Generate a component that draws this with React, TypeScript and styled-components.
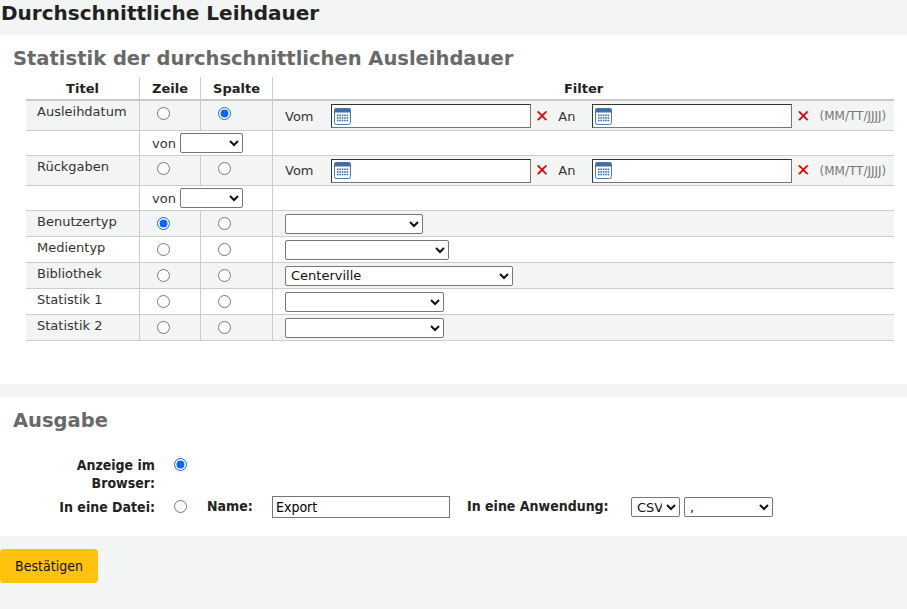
import React from "react";
import styled, { createGlobalStyle } from "styled-components";

const Global = createGlobalStyle`
  html, body { margin: 0; background: #f3f4f4; font-family: "DejaVu Sans", sans-serif; color: #333; }
  input[type=radio] { width: 13px; height: 13px; margin: 0; accent-color: #0a66ff; }
`;

const H1 = styled.h1`
  margin: 0; padding: 1px 0 0 1px; height: 35px; box-sizing: border-box;
  font-size: 20px; font-weight: bold; color: #222;
`;
const Panel = styled.div<{ $h: number }>`
  background: #fff; height: ${p => p.$h}px; box-sizing: border-box; padding: 12px 13px 0 13px;
  margin-bottom: 13px;
`;
const H2 = styled.h2`
  margin: 0; font-size: 19.5px; font-weight: bold; color: #696969; height: 30px;
`;
const Table = styled.table`
  border-collapse: collapse; margin-left: 13px; width: 868px; font-size: 13px;
  th { font-weight: bold; font-size: 13px; height: 22px; border-bottom: 2px solid #c8c8c8; padding: 0; color: #222; }
  th + th, td + td { border-left: 1px solid #ccc; }
  td { border-bottom: 1px solid #ccc; vertical-align: top; padding: 0; }
`;
const Row = styled.tr<{ $alt?: boolean; $h: number }>`
  background: ${p => (p.$alt ? "#f3f4f4" : "#fff")};
  height: ${p => p.$h}px;
`;
const Title = styled.td`padding: 3px 0 0 11px !important; color: #333;`;
const RadioCell = styled.td`padding: 6px 0 0 17px !important;`;
const FilterCell = styled.td`padding: 3px 0 0 12px !important;`;
const Flex = styled.div`display: flex; align-items: center; gap: 0;`;
const Lbl = styled.span<{ $w: number }>`width: ${p => p.$w}px; flex-shrink: 0;`;
const DateBox = styled.div`
  width: 200px; height: 24px; box-sizing: border-box; border: 1px solid #767676; border-top-color: #333; border-left-color: #333;
  display: flex; align-items: center; padding-left: 2px; background: #fff;
`;
const X = styled.span`color: #d00; font-weight: bold; font-size: 17px; margin: 0 9px 0 4px; line-height: 1;`;
const Hint = styled.span`color: #777; font-size: 12px;`;
const Select = styled.select<{ $w: number }>`
  width: ${p => p.$w}px; height: 20px; font-size: 13px; font-family: "DejaVu Sans", sans-serif;
  border: 1px solid #767676; border-radius: 2px; background: #fff; color: #111; padding: 0 1px;
`;
const VonCell = styled.td`padding: 2px 0 0 12px !important;`;

const Cal = () => (
  <svg width="17" height="17" viewBox="0 0 17 17">
    <rect x="0.5" y="0.5" width="16" height="16" rx="2" fill="#fff" stroke="#4a78b0" />
    <rect x="0.5" y="0.5" width="16" height="4" fill="#3f6ea8" />
    {[0, 1, 2].map(r => [0, 1, 2, 3, 4].map(c => (
      <rect key={r + "-" + c} x={3 + c * 2.4} y={6.5 + r * 2.6} width="1.6" height="1.6" fill="#3f6ea8" />
    )))}
  </svg>
);

const DateRow = () => (
  <Flex>
    <Lbl $w={46}>Vom</Lbl>
    <DateBox><Cal /></DateBox>
    <X>✕</X>
    <Lbl $w={34}>An</Lbl>
    <DateBox><Cal /></DateBox>
    <X>✕</X>
    <Hint>(MM/TT/JJJJ)</Hint>
  </Flex>
);

const Out = styled.div`
  display: grid; grid-template-columns: 142px auto; column-gap: 19px; row-gap: 6px;
  margin-top: 17px; font-size: 14px; font-weight: bold; font-stretch: condensed; color: #222;
  font-family: "DejaVu Sans Condensed", "DejaVu Sans", sans-serif;
`;
const OutLbl = styled.div`text-align: right; line-height: 18px;`;
const OutRow = styled.div`display: flex; align-items: flex-start; gap: 0;`;
const TextIn = styled.input`
  width: 178px; height: 22px; box-sizing: border-box; border: 1px solid #767676; font-size: 14px;
  font-family: inherit; font-weight: normal; padding: 0 3px; margin: -2px 17px 0 0;
`;
const Btn = styled.button`
  background: #ffc20e; border: none; border-radius: 4px; width: 98px; height: 34px; font-size: 14px;
  font-family: "DejaVu Sans Condensed", "DejaVu Sans", sans-serif; font-stretch: condensed; color: #111;
`;

export default function App() {
  const simple: [string, number, number, string?][] = [
    ["Benutzertyp", 0, 138], ["Medientyp", 1, 164], ["Bibliothek", 1, 228, "Centerville"],
    ["Statistik 1", 1, 159], ["Statistik 2", 1, 159],
  ];
  return (
    <>
      <Global />
      <H1>Durchschnittliche Leihdauer</H1>
      <Panel $h={349}>
        <H2>Statistik der durchschnittlichen Ausleihdauer</H2>
        <Table>
          <thead>
            <tr><th style={{ width: 113 }}>Titel</th><th style={{ width: 60 }}>Zeile</th><th style={{ width: 71 }}>Spalte</th><th>Filter</th></tr>
          </thead>
          <tbody>
            <Row $alt $h={30}><Title>Ausleihdatum</Title><RadioCell><input type="radio" name="r1" /></RadioCell><RadioCell><input type="radio" name="c1" defaultChecked /></RadioCell><FilterCell><DateRow /></FilterCell></Row>
            <Row $h={25}><td /><VonCell colSpan={2}>von <Select $w={63}><option></option></Select></VonCell><td /></Row>
            <Row $alt $h={30}><Title>Rückgaben</Title><RadioCell><input type="radio" name="r2" /></RadioCell><RadioCell><input type="radio" name="c2" /></RadioCell><FilterCell><DateRow /></FilterCell></Row>
            <Row $h={25}><td /><VonCell colSpan={2}>von <Select $w={63}><option></option></Select></VonCell><td /></Row>
            {simple.map(([t, z, w, v], i) => (
              <Row key={t} $alt={i % 2 === 0} $h={26}>
                <Title>{t}</Title>
                <RadioCell><input type="radio" name={"r" + t} defaultChecked={z === 0} /></RadioCell>
                <RadioCell><input type="radio" name={"c" + t} /></RadioCell>
                <FilterCell><Select $w={w}><option>{v || ""}</option></Select></FilterCell>
              </Row>
            ))}
          </tbody>
        </Table>
      </Panel>
      <Panel $h={139}>
        <H2>Ausgabe</H2>
        <Out>
          <OutLbl>Anzeige im<br />Browser:</OutLbl>
          <OutRow><input type="radio" name="out" defaultChecked style={{ marginTop: 2 }} /></OutRow>
          <OutLbl>In eine Datei:</OutLbl>
          <OutRow>
            <input type="radio" name="out" style={{ marginTop: 2, marginRight: 20 }} />
            <span style={{ width: 65 }}>Name:</span>
            <TextIn defaultValue="Export" />
            <span style={{ width: 164 }}>In eine Anwendung:</span>
            <Select $w={49} style={{ marginTop: -1, marginRight: 4, fontWeight: "normal" }}><option>CSV</option></Select>
            <Select $w={89} style={{ marginTop: -1, fontWeight: "normal" }}><option>,</option></Select>
          </OutRow>
        </Out>
      </Panel>
      <Btn>Bestätigen</Btn>
    </>
  );
}
